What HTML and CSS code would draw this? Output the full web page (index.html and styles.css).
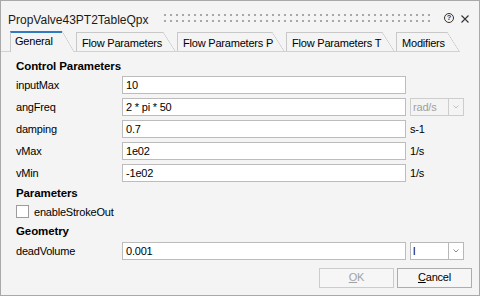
FILE: index.html
```html
<!DOCTYPE html>
<html>
<head>
<meta charset="utf-8">
<link rel="stylesheet" href="styles.css">
</head>
<body>
<div class="titlebar">
  <span class="title">PropValve43PT2TableQpx</span>
  <svg class="grip" height="8" xmlns="http://www.w3.org/2000/svg">
    <defs><pattern id="dots" width="6" height="6" patternUnits="userSpaceOnUse"><rect width="2" height="2" fill="#a8a8a8"/></pattern></defs>
    <rect width="100%" height="8" fill="url(#dots)"/>
  </svg>
  <span class="help">?</span>
  <svg class="close" width="8" height="8" viewBox="0 0 8 8" xmlns="http://www.w3.org/2000/svg">
    <path d="M0.5 0.5 L7.5 7.5 M7.5 0.5 L0.5 7.5" stroke="#333" stroke-width="1.1" fill="none"/>
  </svg>
</div>

<div class="tabbar">
  <div class="tab active"><span class="tab-label w-general">General</span></div>
  <div class="tab"><span class="tab-label w-flow">Flow Parameters</span></div>
  <div class="tab"><span class="tab-label w-flowp">Flow Parameters P</span></div>
  <div class="tab"><span class="tab-label w-flowt">Flow Parameters T</span></div>
  <div class="tab"><span class="tab-label w-mod">Modifiers</span></div>
</div>

<div class="content">
  <div class="heading">Control Parameters</div>
  <div class="form">
    <span class="label">inputMax</span>
    <div class="field">10</div>
    <span></span>

    <span class="label">angFreq</span>
    <div class="field">2 * pi * 50</div>
    <div class="combo disabled">
      <span class="combo-text">rad/s</span>
      <span class="combo-btn"><svg width="6" height="4" viewBox="0 0 6 4"><path d="M0.5 0.5 L3 3 L5.5 0.5" stroke="#c0c0c0" stroke-width="1" fill="none"/></svg></span>
    </div>

    <span class="label">damping</span>
    <div class="field">0.7</div>
    <span class="unit">s-1</span>

    <span class="label">vMax</span>
    <div class="field">1e02</div>
    <span class="unit">1/s</span>

    <span class="label">vMin</span>
    <div class="field">-1e02</div>
    <span class="unit">1/s</span>
  </div>

  <div class="heading h-params">Parameters</div>
  <div class="check-row">
    <span class="check"></span>
    <span class="label">enableStrokeOut</span>
  </div>

  <div class="heading h-geom">Geometry</div>
  <div class="form form-geom">
    <span class="label">deadVolume</span>
    <div class="field">0.001</div>
    <div class="combo">
      <span class="combo-text">l</span>
      <span class="combo-btn"><svg width="6" height="4" viewBox="0 0 6 4"><path d="M0.5 0.5 L3 3 L5.5 0.5" stroke="#8a8a8a" stroke-width="1" fill="none"/></svg></span>
    </div>
  </div>
</div>

<div class="buttons">
  <div class="btn disabled"><u>O</u>K</div>
  <div class="btn"><u>C</u>ancel</div>
</div>
</body>
</html>
```

FILE: styles.css
```css
* { box-sizing: border-box; }

body {
  margin: 0;
  width: 480px;
  height: 296px;
  overflow: hidden;
  background: #f4f4f4;
  border: 1px solid #a9a9a9;
  font-family: "Liberation Sans", Arial, sans-serif;
  font-size: 11px;
  letter-spacing: -0.2px;
  color: #000;
}

/* title bar */
.titlebar {
  display: flex;
  align-items: flex-start;
  height: 30px;
  padding: 0 10px 0 7px;
}
.title {
  font-size: 12px;
  line-height: 14px;
  letter-spacing: 0;
  margin-top: 12px;
  color: #1a1a1a;
  white-space: nowrap;
}
.grip {
  flex: 1;
  display: block;
  height: 8px;
  margin: 13px 12px 0 15px;
}
.help {
  width: 10px;
  height: 10px;
  margin-top: 12px;
  border: 1px solid #333;
  border-radius: 50%;
  font-size: 7.5px;
  font-weight: bold;
  line-height: 8px;
  letter-spacing: 0;
  text-align: center;
  color: #333;
}
.close {
  display: block;
  margin: 14px 0 0 7px;
}

/* tabs */
.tabbar {
  display: flex;
  align-items: flex-end;
  height: 21px;
  border-bottom: 1px solid #d2d2d2;
  padding-left: 9px;
  margin-right: 19px;
}
.tab {
  display: flex;
  height: 19px;
  margin-right: 2px;
}
.tab::after {
  content: "";
  width: 12px;
  background: linear-gradient(to top right, transparent calc(50% - 0.6px), #c8c8c8 50%, transparent calc(50% + 0.6px));
}
.tab-label {
  border-top: 1px solid #c8c8c8;
  border-left: 1px solid #c8c8c8;
  padding: 4px 0 0 5px;
  line-height: 13px;
  white-space: nowrap;
}
.tab.active {
  height: 21px;
  margin-bottom: -1px;
  background: #f4f4f4;
}
.tab.active .tab-label {
  border-top: 2px solid #2e7bc2;
  padding: 2px 0 0 4px;
}
.w-general { width: 52px; }
.w-flow { width: 87px; }
.w-flowp { width: 95px; }
.w-flowt { width: 96px; }
.w-mod { width: 51px; }

/* content */
.content {
  padding: 5px 15px 0 15px;
}
.heading {
  font-weight: bold;
  font-size: 11.5px;
  height: 18px;
  line-height: 18px;
  letter-spacing: -0.1px;
}
.h-params { margin-top: 2px; }
.h-geom { margin-top: 2px; }

.form {
  display: grid;
  grid-template-columns: 102px 284px 54px;
  grid-auto-rows: 18px;
  column-gap: 4px;
  row-gap: 4px;
  align-items: center;
  margin-top: 1px;
}
.form-geom { margin-top: 2px; }

.label { white-space: nowrap; }

.field {
  height: 18px;
  border: 1px solid #bcbcbc;
  background: #fff;
  padding: 0 3px;
  line-height: 16px;
  white-space: nowrap;
}
.unit { white-space: nowrap; }

.combo {
  display: flex;
  height: 18px;
  border: 1px solid #b8b8b8;
  background: #fff;
}
.combo-text {
  flex: 1;
  padding-left: 2px;
  line-height: 16px;
}
.combo-btn {
  width: 15px;
  border-left: 1px solid #b8b8b8;
  display: flex;
  align-items: center;
  justify-content: center;
}
.combo-btn svg { display: block; }
.combo.disabled {
  background: #f4f4f4;
  border-color: #cdcdcd;
  color: #a0a0a0;
}
.combo.disabled .combo-btn { border-left-color: #cdcdcd; }

.check-row {
  display: flex;
  align-items: center;
  height: 17px;
  margin-top: 1px;
}
.check {
  width: 13px;
  height: 13px;
  border: 1px solid #9c9c9c;
  background: #fff;
  margin-right: 5px;
}

/* buttons */
.buttons {
  display: flex;
  justify-content: flex-end;
  gap: 3px;
  margin-top: 8px;
  padding-right: 7px;
}
.btn {
  width: 75px;
  height: 20px;
  border: 1px solid #adadad;
  background: #f6f6f6;
  text-align: center;
  line-height: 17px;
  color: #000;
}
.btn.disabled {
  border-color: #cccccc;
  color: #a2a2a2;
}
```
